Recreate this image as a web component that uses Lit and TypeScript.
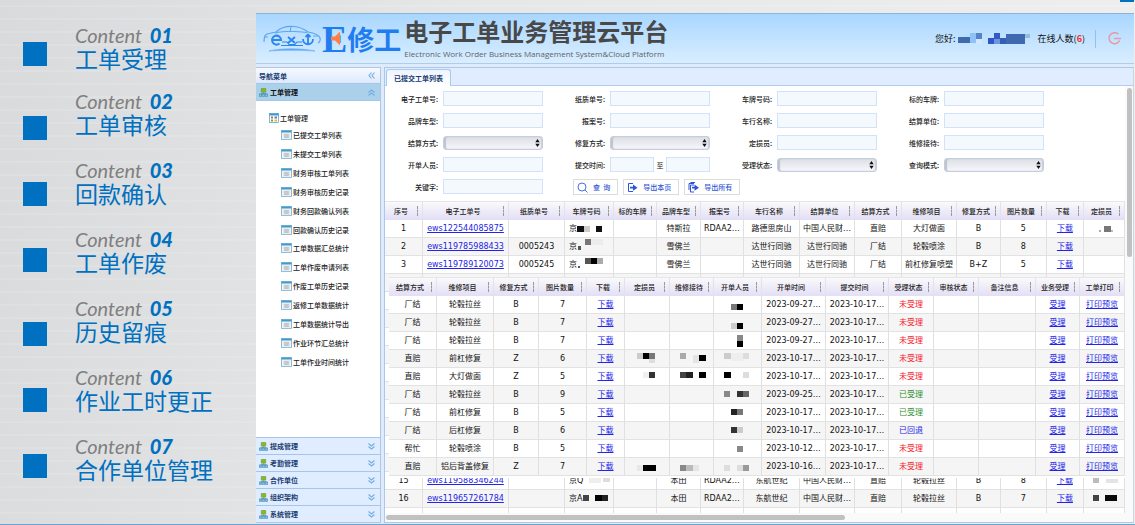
import { LitElement, html, svg, css, nothing } from "lit";
import { customElement } from "lit/decorators.js";

type Px = [number, number, number, number, string];
type Cell = string | { text?: string; link?: boolean; tone?: string; px?: Px[]; side?: boolean };

const link = (text: string): Cell => ({ text, link: true });
const mask = (...px: Px[]): Cell => ({ px });
const plate = (text: string, ...px: Px[]): Cell => ({ text, px, side: true });
const red = (text: string): Cell => ({ text, tone: "red" });
const green = (text: string): Cell => ({ text, tone: "green" });
const blue = (text: string): Cell => ({ text, tone: "blue" });

const OUTLINE = ["工单受理", "工单审核", "回款确认", "工单作废", "历史留痕", "作业工时更正", "合作单位管理"];

const TREE = [
  "已提交工单列表", "未提交工单列表", "财务审核工单列表", "财务审核历史记录", "财务回款确认列表",
  "回款确认历史记录", "工单数据汇总统计", "工单作废申请列表", "作废工单历史记录", "返修工单数据统计",
  "工单数据统计导出", "作业环节汇总统计", "工单作业时间统计",
];

const GROUPS = ["提成管理", "考勤管理", "合作单位", "组织架构", "系统管理"];

const ORDER_COLS: [string, number][] = [
  ["序号", 38], ["电子工单号", 86], ["纸质单号", 56], ["车牌号码", 49], ["标的车牌", 43],
  ["品牌车型", 44], ["报案号", 43], ["车行名称", 56], ["结算单位", 55], ["结算方式", 47],
  ["维修项目", 55], ["修复方式", 44], ["图片数量", 46], ["下载", 37], ["定损员", 41],
];

const ORDERS: Cell[][] = [
  ["1", link("ews122544085875"), "", plate("京", [0, 5, 7, 6, "#111"], [7, 5, 6, 6, "#ccc"], [19, 5, 6, 6, "#111"]), "", "特斯拉", "RDAA2…", "路德思房山", "中国人民财…", "直赔", "大灯做面", "B", "5", link("下载"), mask([20, 5, 7, 6, "#777"], [15, 9, 2, 2, "#aaa"], [27, 9, 2, 2, "#bbb"])],
  ["2", link("ews119785988433"), "0005243", plate("京", [8, 0, 6, 6, "#777"], [14, 0, 12, 6, "#ececec"], [1, 7, 3, 4, "#555"]), "", "雪佛兰", "", "达世行同驰", "达世行同驰", "厂结", "轮毂喷涂", "B", "8", link("下载"), ""],
  ["3", link("ews119789120073"), "0005245", plate("京", [8, 1, 6, 6, "#555"], [14, 1, 6, 6, "#000"], [20, 1, 6, 6, "#aaa"], [1, 9, 2, 2, "#555"]), "", "雪佛兰", "", "达世行同驰", "达世行同驰", "厂结", "前杠修复喷塑", "B+Z", "5", link("下载"), ""],
  ...Array.from({ length: 11 }, () => Array(15).fill("") as Cell[]),
  ["15", link("ews119588346244"), "", plate("京Q", [6, 5, 12, 5, "#eee"], [20, 5, 7, 4, "#ddd"]), "", "本田", "RDAA2…", "东航世纪", "中国人民财…", "直赔", "轮毂拉丝", "B", "8", link("下载"), mask([9, 5, 6, 5, "#bbb"], [22, 6, 12, 4, "#e4e4e4"])],
  ["16", link("ews119657261784"), "", plate("京A", [1, 4, 6, 6, "#444"], [13, 4, 7, 6, "#000"], [20, 4, 6, 6, "#222"]), "", "本田", "RDAA2…", "东航世纪", "中国人民财…", "直赔", "轮毂拉丝", "B", "7", link("下载"), mask([9, 4, 6, 6, "#444"], [21, 4, 12, 6, "#0a0a0a"])],
  Array(15).fill("") as Cell[],
];

const DETAIL_COLS: [string, number][] = [
  ["结算方式", 48], ["维修项目", 57], ["修复方式", 45], ["图片数量", 48], ["下载", 38],
  ["定损员", 45], ["维修接待", 44], ["开单人员", 48], ["开单时间", 64], ["提交时间", 63],
  ["受理状态", 45], ["审核状态", 45], ["备注信息", 57], ["业务受理", 44], ["工单打印", 45],
];

const detail = (pay: string, item: string, way: string, n: string, a: Cell, b: Cell, c: Cell, opened: string, state: Cell): Cell[] =>
  [pay, item, way, n, link("下载"), a, b, c, opened, "2023-10-17…", state, "", "", link("受理"), link("打印预览")];

const DETAILS: Cell[][] = [
  detail("厂结", "轮毂拉丝", "B", "7", "", "", mask([14, 7, 7, 6, "#777"], [20, 7, 6, 6, "#000"]), "2023-09-27…", red("未受理")),
  detail("厂结", "轮毂拉丝", "B", "7", "", "", mask([14, 8, 6, 6, "#ccc"], [20, 8, 6, 6, "#000"]), "2023-09-27…", red("未受理")),
  detail("厂结", "轮毂拉丝", "B", "7", "", "", mask([20, 2, 6, 6, "#888"], [20, 8, 6, 6, "#000"]), "2023-09-27…", red("未受理")),
  detail("直赔", "前杠修复", "Z", "6", mask([11, 2, 6, 6, "#ccc"], [17, 2, 6, 6, "#000"], [23, 2, 6, 6, "#777"], [23, 8, 6, 4, "#ddd"]), mask([9, 2, 6, 6, "#aaa"], [22, 4, 6, 8, "#e4e4e4"], [28, 4, 7, 6, "#000"]), mask([7, 2, 7, 6, "#ccc"], [14, 2, 12, 8, "#eee"], [26, 2, 6, 6, "#ddd"]), "2023-10-17…", red("未受理")),
  detail("直赔", "大灯做面", "Z", "5", mask([17, 3, 6, 6, "#f0f0f0"], [23, 3, 6, 6, "#333"]), mask([9, 3, 6, 6, "#444"], [15, 3, 7, 6, "#222"], [28, 3, 7, 6, "#000"]), mask([7, 3, 7, 6, "#000"], [26, 3, 6, 6, "#ddd"]), "2023-10-17…", red("未受理")),
  detail("厂结", "轮毂拉丝", "B", "9", "", "", mask([7, 4, 6, 6, "#888"], [20, 4, 6, 6, "#333"], [26, 4, 6, 6, "#666"]), "2023-09-25…", green("已受理")),
  detail("厂结", "前杠修复", "B", "5", "", "", mask([14, 4, 6, 6, "#222"], [20, 4, 6, 6, "#777"]), "2023-10-17…", green("已受理")),
  detail("厂结", "后杠修复", "B", "6", "", "", mask([14, 4, 6, 6, "#333"], [20, 4, 6, 6, "#ccc"]), "2023-10-17…", blue("已回退")),
  detail("帮忙", "轮毂喷涂", "B", "5", "", "", mask([20, 5, 6, 6, "#888"]), "2023-10-12…", red("未受理")),
  detail("直赔", "铝后背盖修复", "Z", "7", mask([11, 6, 6, 6, "#e8e8e8"], [17, 6, 13, 6, "#000"]), mask([9, 6, 6, 6, "#888"], [15, 6, 7, 6, "#bbb"], [22, 6, 6, 6, "#e5e5e5"]), mask([7, 6, 6, 6, "#ddd"], [20, 6, 6, 6, "#ddd"], [26, 6, 6, 6, "#999"]), "2023-10-16…", red("未受理")),
];

const pixels = (px: Px[], w: number) => html`<svg class="mosaic" width=${w} height="16" aria-hidden="true">
  ${px.map(([x, y, pw, ph, c]) => svg`<rect x=${x} y=${y} width=${pw} height=${ph} fill=${c} />`)}
</svg>`;

@customElement("order-grid")
class OrderGrid extends LitElement {
  static properties = { cols: { attribute: false }, rows: { attribute: false } };
  declare cols: [string, number][];
  declare rows: Cell[][];

  static styles = css`
    :host { display: block; }
    table {
      width: 100%; table-layout: fixed; border-collapse: separate; border-spacing: 0;
      background: #fff; color: #111;
      font: 8px/12px "DejaVu Sans", "Noto Sans CJK SC", sans-serif;
    }
    th {
      height: 18px; padding: 0; font-size: 7px; font-weight: 500; color: #222;
      font-family: "Noto Sans CJK SC", sans-serif;
      background: linear-gradient(#fafafa, #ece9f8 60%, #e2dff6);
      border-right: 1px solid #e3e1ec; box-sizing: border-box;
    }
    .head { display: flex; align-items: center; }
    .name { flex: 1; text-align: center; white-space: nowrap; }
    .grip { height: 10px; margin-right: 4px; border-left: 1px dashed #999; }
    td {
      height: 18px; padding: 0; box-sizing: border-box; text-align: center;
      white-space: nowrap; overflow: hidden;
      border-right: 1px solid #e0e0e0; border-bottom: 1px solid #e2e2e2;
    }
    tr:nth-child(even) td { background: #f5f5f5; }
    a { color: #2424e8; text-decoration: underline; }
    .red { color: #f8202c; }
    .green { color: #2f8f2f; }
    .blue { color: #2424e8; }
    .side { display: flex; align-items: center; padding-left: 4px; }
    .mosaic { display: block; margin: 0 auto; }
    .side .mosaic { margin: 0; }
  `;

  private cell(c: Cell) {
    if (typeof c === "string") return c;
    if (c.side) return html`<div class="side">${c.text}${pixels(c.px!, 28)}</div>`;
    if (c.px) return pixels(c.px, 42);
    if (c.link) return html`<a href="#">${c.text}</a>`;
    return html`<span class=${c.tone ?? ""}>${c.text}</span>`;
  }

  render() {
    const total = this.cols.reduce((s, [, w]) => s + w, 0);
    return html`<table>
      <colgroup>${this.cols.map(([, w]) => html`<col style="width:${(w / total) * 100}%" />`)}</colgroup>
      <thead><tr>${this.cols.map(([n]) => html`<th scope="col"><div class="head"><span class="name">${n}</span><i class="grip"></i></div></th>`)}</tr></thead>
      <tbody>${this.rows.map((r) => html`<tr>${r.map((c) => html`<td>${this.cell(c)}</td>`)}</tr>`)}</tbody>
    </table>`;
  }
}

const groupIcon = html`<svg class="ico" width="9" height="9" viewBox="0 0 18 18" aria-hidden="true">
  <rect x="4.500" y="0.500" width="9" height="8" rx="1" fill="#86b92a" stroke="#5d8f22" />
  <path d="M9 9v3M3.500 13v-2h11v2" fill="none" stroke="#5c86a8" stroke-width="1.300" />
  <rect x="0.500" y="12" width="5" height="5" fill="#7fc0e4" stroke="#3f87b4" />
  <rect x="6.500" y="12" width="5" height="5" fill="#7fc0e4" stroke="#3f87b4" />
  <rect x="12.500" y="12" width="5" height="5" fill="#7fc0e4" stroke="#3f87b4" />
</svg>`;

const rootIcon = html`<svg class="ico" width="10" height="10" viewBox="0 0 20 20" aria-hidden="true">
  <rect x="1" y="1" width="18" height="18" fill="#fff" stroke="#5a9fc9" stroke-width="1.500" />
  <rect x="1" y="1" width="18" height="4" fill="#3d9bd2" />
  <rect x="4" y="7" width="4" height="4" fill="#e9553f" /><rect x="11" y="7" width="5" height="4" fill="#4b7fd8" />
  <rect x="4" y="13" width="4" height="4" fill="#5fae3d" /><rect x="11" y="13" width="5" height="4" fill="#efb52e" />
</svg>`;

const leafIcon = html`<svg class="ico" width="11" height="10" viewBox="0 0 20 20" preserveAspectRatio="none" aria-hidden="true">
  <rect x="1" y="1" width="18" height="18" fill="#f3f6f8" stroke="#7fb0cf" stroke-width="1.600" />
  <rect x="1" y="1" width="18" height="4" fill="#3d9bd2" />
  <rect x="4" y="7" width="12" height="10" fill="#dfe2e6" />
  <path d="M6 9.500h8M6 12h8M6 14.500h8" stroke="#a5abb2" stroke-width="1.300" />
</svg>`;

const chevrons = (d: string) => html`<svg class="chev" width="7" height="7" viewBox="0 0 14 14" fill="none" stroke="#72aee2" stroke-width="2.200" aria-hidden="true"><path d=${d} /></svg>`;
const LEFT = "M7 1L2 7l5 6M13 1L8 7l5 6";
const UP = "M1 7l6-5 6 5M1 13l6-5 6 5";
const DOWN = "M1 1l6 5 6-5M1 7l6 5 6-5";

@customElement("app-root")
class AppRoot extends LitElement {
  static styles = css`
    :host {
      display: grid; grid-template-columns: 256px minmax(0, 1fr);
      height: 100vh; box-sizing: border-box; overflow: hidden;
      border-bottom: 1px solid #69a3d2; position: relative;
      font: 7px/12px "Noto Sans CJK SC", sans-serif; color: #222;
      background:
        repeating-linear-gradient(#ffffff00 0 5px, #ffffff1c 5px 7px, #ffffff00 7px 13px),
        linear-gradient(100deg, #d9dadb, #dedfe0 16%, #e6e7e7 40%, #efefef);
    }
    .corner { position: absolute; top: 0; right: 1px; width: 14px; height: 2px; background: #0070c0; }
    ul, ol { list-style: none; margin: 0; padding: 0; }

    .outline { display: flex; gap: 28px; padding-left: 23px; }
    .marks { display: flex; flex-direction: column; gap: 42px; padding-top: 42px; }
    .mark { width: 24px; height: 24px; background: #0070c0; }
    .mark:nth-child(3n + 2) { margin-top: 8px; }
    .topics { padding-top: 23px; }
    .topic { height: 69px; }
    .topic:first-child { height: 66px; }
    .kicker { font: italic 400 20px/24px Lato, sans-serif; color: #7f7f7f; }
    .kicker b { font-weight: 900; color: #0070c0; padding-left: 3px; }
    .topic h2 { margin: 0; font: 400 23px/27px "Liberation Sans", "Noto Sans CJK SC", sans-serif; color: #0070c0; }

    .app {
      display: grid; grid-template-rows: 50px minmax(0, 1fr); row-gap: 3px;
      margin: 13px 1px 1px 0; background: #dfeafa; min-height: 0;
      border-top: 1px solid #8fb4d3; box-sizing: border-box;
    }
    .bar {
      display: flex; align-items: center; padding: 0 13px 0 7px; box-sizing: border-box;
      background: linear-gradient(#a9d6ff, #bfe1ff 45%, #d9eeff);
      border-bottom: 1px solid #b3cce6;
    }
    .brand { display: flex; align-items: center; margin-left: 1px; color: #1f7df0; }
    .brand .e { position: relative; font: bold 38px/36px "Liberation Serif", serif; }
    .brand .e::after {
      content: ""; position: absolute; left: 9px; top: 11px; width: 9px; height: 14px;
      background: #ff7f45; clip-path: polygon(0 35%, 45% 35%, 100% 0, 100% 100%, 45% 65%, 0 65%);
    }
    .brand .cn { font-size: 27px; line-height: 36px; font-weight: 700; }
    .title { margin-left: 3px; }
    .title h1 { margin: 0; font: 700 24px/30px "Liberation Sans", "Noto Sans CJK SC", sans-serif; color: #484848; }
    .title p { margin: 0; font: 8px/11px "Open Sans", sans-serif; color: #5f6368; }
    .user { margin-left: auto; display: flex; align-items: center; font-size: 9px; line-height: 14px; color: #111; }
    .user .num { color: #ff2a2a; }
    .user .online { margin: 0 10px 0 8px; }
    .user button { border: 0; border-left: 1px solid #95c1e8; background: none; padding: 2px 0 2px 12px; height: 18px; display: flex; align-items: center; }

    .body { display: grid; grid-template-columns: 125px minmax(0, 1fr); column-gap: 3px; min-height: 0; }
    .nav { display: flex; flex-direction: column; background: #fff; border: 1px solid #a9c8ea; border-left: 0; box-sizing: border-box; }
    .navhead, .group {
      display: flex; align-items: center; gap: 2px; width: 100%; height: 17px; flex: none;
      padding: 0 5px 0 3px; box-sizing: border-box; border: 0; text-align: left;
      font: 700 7px/12px "Noto Sans CJK SC", sans-serif; color: #1b3c70;
      background: #e0ecff; border-bottom: 1px solid #a5c6ea;
    }
    .navhead { height: 16px; background: linear-gradient(#f6faff, #dde9fb); }
    .group.open { background: #abd0ea; color: #111; }
    .chev { margin-left: auto; }
    .tree { flex: 1; padding: 11px 0 0 13px; min-height: 0; font-weight: 500; }
    .node { display: flex; align-items: center; gap: 1px; }
    .node a { color: #222; text-decoration: none; }
    .leaves { display: grid; grid-auto-rows: 1fr; height: 245px; padding: 2px 0 0 12px; }
    .groups .group { border-bottom: 0; border-top: 1px solid #a5c6ea; }

    .pane { display: flex; flex-direction: column; background: #fff; border: 1px solid #a9c8ea; border-right-color: #c9d6e6; box-sizing: border-box; min-width: 0; min-height: 0; }
    .tabs { height: 18px; flex: none; display: flex; align-items: flex-end; padding-left: 1px; background: #e0ecff; border-bottom: 1px solid #b3cdee; box-sizing: border-box; }
    .tab { height: 17px; box-sizing: border-box; margin-bottom: -1px; padding: 0 7px; border: 1px solid #a9c8ea; border-bottom: 0; border-radius: 3px 3px 0 0; background: linear-gradient(#eef5ff, #fff); font: 700 7px/15px "Noto Sans CJK SC", sans-serif; color: #1b3c70; }
    .work { flex: 1; display: grid; grid-template-columns: minmax(0, 1fr) 8px; min-height: 0; }
    .main { display: flex; flex-direction: column; min-height: 0; min-width: 0; }
    .form { display: grid; grid-template-columns: repeat(4, minmax(0, 167px)); row-gap: 7px; padding: 5px 0 6px; }
    .field { display: flex; align-items: center; height: 15px; padding-right: 9px; }
    .field label { flex: 1; text-align: right; padding-right: 5px; font-weight: 500; white-space: nowrap; }
    .ctl { width: 100px; display: flex; align-items: center; justify-content: space-between; position: relative; }
    .ctl input, .ctl select {
      width: 100%; height: 15px; box-sizing: border-box; padding: 0 3px; margin: 0; min-width: 0;
      border: 1px solid #d3e2fb; background: #f4f9fe; font: inherit; border-radius: 0; outline: 0;
    }
    .ctl select { appearance: none; height: 14px; border-color: #c5cde0; border-radius: 3px; background: linear-gradient(#dcdfe4, #e9ebf0 50%, #f5f7fc); box-shadow: inset 2px 0 1px #bfc3cc, inset -1px 0 1px #c9cdd6; }
    .ctl .upd { position: absolute; right: 3px; top: 3px; pointer-events: none; }
    .ctl.range input { width: 44px; }
    .actions { display: flex; gap: 5px; grid-column: span 3; padding-left: 21px; height: 16px; }
    .act { display: flex; align-items: center; gap: 5px; padding: 0 7px 0 3px; border: 1px solid #dcdcdc; background: #fff; color: #2d55d8; font: 500 7px/12px "Noto Sans CJK SC", sans-serif; white-space: pre; }
    .grids { flex: 1; position: relative; overflow: hidden; border-top: 1px solid #e4e4ea; min-height: 0; }
    .over { position: absolute; top: 75px; left: 4px; right: 0; background: #fff; border-top: 1px solid #e6e6ea; padding-bottom: 2px; }
    .hbar { height: 9px; flex: none; background: #fafafa; display: flex; align-items: center; }
    .hthumb { width: 62%; height: 5px; margin-left: 1px; border-radius: 3px; background: #c1c1c1; }
    .vbar { background: #fafafa; padding: 2px 2px 0; }
    .vthumb { height: 39%; width: 5px; border-radius: 3px; background: #c1c1c1; }
  `;

  private field(label: string, kind: "text" | "select" | "range", id: string) {
    return html`<div class="field"><label for=${id}>${label}:</label>
      <span class="ctl ${kind}">${kind === "select"
        ? html`<select id=${id}></select><svg class="upd" width="5" height="8" viewBox="0 0 5 8" aria-hidden="true"><path d="M2.500 0L4.700 3.200H.3zM2.500 8L.3 4.800h4.400z" fill="#111" /></svg>`
        : html`<input id=${id} type="text" />${kind === "range" ? html`<span>至</span><input type="text" aria-label="至" />` : nothing}`}
      </span></div>`;
  }

  render() {
    return html`
      <span class="corner"></span>
      <section class="outline">
        <div class="marks">${OUTLINE.map(() => html`<span class="mark"></span>`)}</div>
        <ol class="topics">${OUTLINE.map((t, i) => html`<li class="topic"><div class="kicker">Content <b>0${i + 1}</b></div><h2>${t}</h2></li>`)}</ol>
      </section>

      <div class="app">
        <header class="bar">
          <svg width="58" height="28" viewBox="0 0 58 28" fill="none" stroke="#2b86ee" aria-hidden="true">
            <path d="M1 17C1 11 2 9 6 8.500L13 7C18 2 24 1 31 1.500C38 2 41 4 45 7C51 8 56 10 57 13C57.500 15 57 17 55 18" stroke-width="1.200" stroke="#5aa4f4" />
            <path d="M12 8C20 6 30 6 44 7.500M28 2L27 7M1 12H5M50 11H55" stroke-width="1" stroke="#5aa4f4" />
            <path d="M10 15H18A4.500 4.500 0 1 0 16.500 18.500" stroke-width="2" />
            <path d="M25 12L32 18M32 12L25 18" stroke-width="2" />
            <path d="M45 10V19M42.500 12L45 9.500L47.500 12M40 14C40 21 50 21 50 14" stroke-width="1.800" />
            <path d="M19 17H24L26 19.500H32L34 17H39M18 20.500H40" stroke-width="1.200" />
            <path d="M6 26C18 23 38 23 52 26C38 25 20 25 6 26Z" fill="#4da0f5" stroke="#7db9f7" stroke-width=".8" />
          </svg>
          <div class="brand"><span class="e">E</span><span class="cn">修工</span></div>
          <div class="title"><h1>电子工单业务管理云平台</h1><p>Electronic Work Order Business Management System&amp;Cloud Platform</p></div>
          <div class="user">
            <span>您好:</span>
            <svg width="74" height="14" aria-hidden="true">
              <rect x="2" y="5" width="12" height="6" fill="#4169ac" /><rect x="8" y="1" width="6" height="4" fill="#b6e0ff" />
              <rect x="14" y="1" width="6" height="10" fill="#8fc2f4" /><rect x="20" y="1" width="6" height="6" fill="#5584c9" /><rect x="20" y="7" width="6" height="5" fill="#cfe8fd" />
              <rect x="32" y="6" width="6" height="6" fill="#2f55c8" /><rect x="38" y="1" width="6" height="6" fill="#3259c8" /><rect x="38" y="7" width="6" height="5" fill="#6f96dc" />
              <rect x="44" y="6" width="6" height="6" fill="#355fb4" /><rect x="50" y="2" width="19" height="10" fill="#3f69b0" /><rect x="69" y="2" width="5" height="4" fill="#93bde0" />
            </svg>
            <span class="online">在线人数(<b class="num">6</b>)</span>
            <button aria-label="退出"><svg width="13" height="13" viewBox="0 0 13 13" fill="none" stroke="#e79aa6" stroke-width="1.500" aria-hidden="true"><path d="M10.500 2.300A5.500 5.500 0 1 0 11.600 8.500M6 6.500H13" /></svg></button>
          </div>
        </header>

        <div class="body">
          <nav class="nav">
            <div class="navhead">导航菜单${chevrons(LEFT)}</div>
            <button class="group open">${groupIcon}工单管理${chevrons(UP)}</button>
            <div class="tree">
              <div class="node">${rootIcon}工单管理</div>
              <ul class="leaves">${TREE.map((t) => html`<li class="node">${leafIcon}<a href="#">${t}</a></li>`)}</ul>
            </div>
            <div class="groups">${GROUPS.map((g) => html`<button class="group">${groupIcon}${g}${chevrons(DOWN)}</button>`)}</div>
          </nav>

          <main class="pane">
            <div class="tabs"><button class="tab">已提交工单列表</button></div>
            <div class="work">
              <div class="main">
                <form class="form">
                  ${this.field("电子工单号", "text", "f1")}${this.field("纸质单号", "text", "f2")}${this.field("车牌号码", "text", "f3")}${this.field("标的车牌", "text", "f4")}
                  ${this.field("品牌车型", "text", "f5")}${this.field("报案号", "text", "f6")}${this.field("车行名称", "text", "f7")}${this.field("结算单位", "text", "f8")}
                  ${this.field("结算方式", "select", "f9")}${this.field("修复方式", "select", "f10")}${this.field("定损员", "text", "f11")}${this.field("维修接待", "text", "f12")}
                  ${this.field("开单人员", "text", "f13")}${this.field("提交时间", "range", "f14")}${this.field("受理状态", "select", "f15")}${this.field("查询模式", "select", "f16")}
                  ${this.field("关键字", "text", "f17")}
                  <div class="actions">
                    <button type="button" class="act"><svg width="11" height="11" viewBox="0 0 11 11" fill="none" stroke="#4a6fe0" aria-hidden="true"><circle cx="5" cy="5" r="4" /><path d="M8 8l2.500 2.500" /></svg>查  询</button>
                    <button type="button" class="act"><svg width="11" height="11" viewBox="0 0 11 11" fill="none" stroke="#2d55d8" aria-hidden="true"><path d="M6 1.500H1.500v8H6" /><path d="M3 4.800h3V2.600L10.500 5.700 6 8.800V6.600H3z" fill="#2d55d8" stroke="none" /></svg>导出本页</button>
                    <button type="button" class="act"><svg width="11" height="11" viewBox="0 0 11 11" fill="none" stroke="#2d55d8" aria-hidden="true"><path d="M7 .5H2.500M1 8V1.500h5M6 10H2.500V3H6" /><path d="M4 4.800h2.500V2.600L11 5.700 6.500 8.800V6.600H4z" fill="#2d55d8" stroke="none" /></svg>导出所有</button>
                  </div>
                </form>
                <div class="grids">
                  <order-grid .cols=${ORDER_COLS} .rows=${ORDERS}></order-grid>
                  <div class="over"><order-grid .cols=${DETAIL_COLS} .rows=${DETAILS}></order-grid></div>
                </div>
                <div class="hbar"><div class="hthumb"></div></div>
              </div>
              <div class="vbar"><div class="vthumb"></div></div>
            </div>
          </main>
        </div>
      </div>`;
  }
}
